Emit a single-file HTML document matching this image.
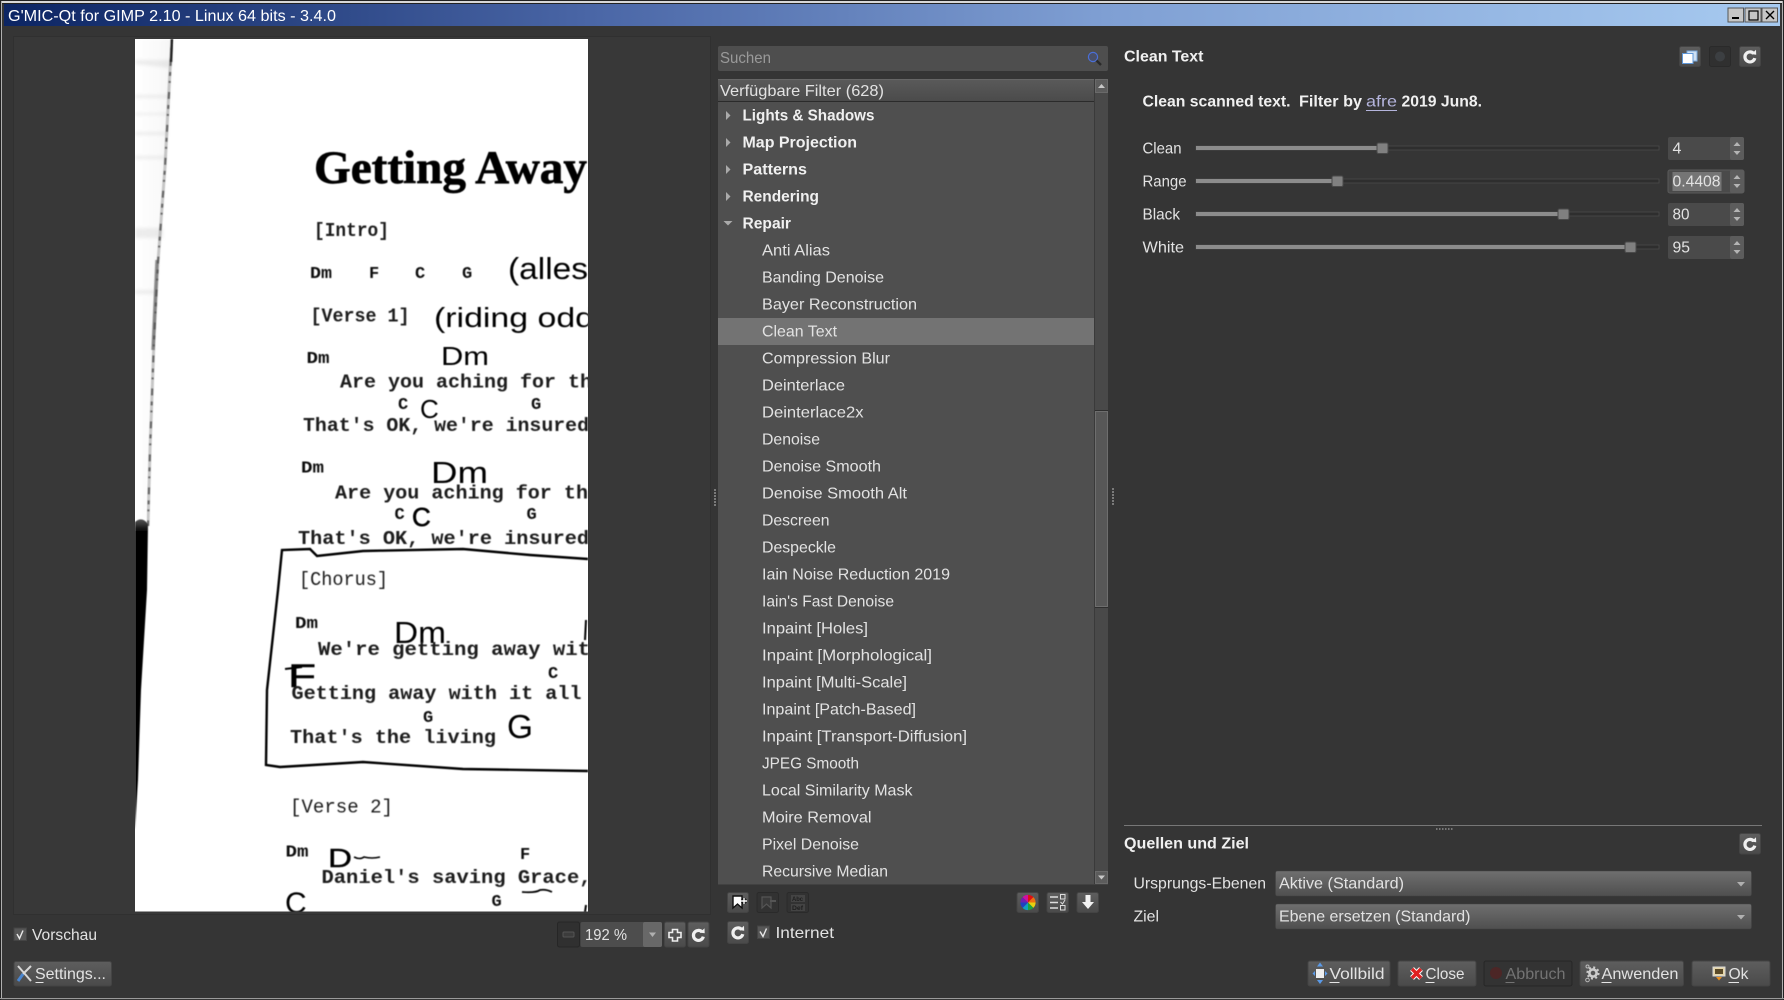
<!DOCTYPE html>
<html><head><meta charset="utf-8"><title>G'MIC-Qt</title>
<style>
html,body{margin:0;padding:0;background:#353535;width:1784px;height:1000px;overflow:hidden}
svg{display:block}
text{font-family:"Liberation Sans",sans-serif;font-size:16px;fill:#e2e2e2;white-space:pre}
.b{font-weight:bold;fill:#f0f0f0}
.m{font-family:"Liberation Mono",monospace;font-weight:bold;font-size:19px;fill:#1a1a1a}
.c{font-family:"Liberation Mono",monospace;font-weight:bold;font-size:17px;fill:#111}
.h{font-family:"Liberation Sans",sans-serif;fill:#000}
.i{font-style:italic}
</style></head><body>
<svg width="1784" height="1000" viewBox="0 0 1784 1000" xmlns="http://www.w3.org/2000/svg">
<defs>
<linearGradient id="tb" x1="0" x2="1" y1="0" y2="0"><stop offset="0" stop-color="#0c2563"/><stop offset=".33" stop-color="#4a66a6"/><stop offset=".62" stop-color="#7f9fd3"/><stop offset="1" stop-color="#a7caf0"/></linearGradient>
<linearGradient id="btn" x1="0" x2="0" y1="0" y2="1"><stop offset="0" stop-color="#5e5e5e"/><stop offset="1" stop-color="#4a4a4a"/></linearGradient>
<linearGradient id="cmb" x1="0" x2="0" y1="0" y2="1"><stop offset="0" stop-color="#6f6f6f"/><stop offset="1" stop-color="#4f4f4f"/></linearGradient>
<linearGradient id="hdr" x1="0" x2="0" y1="0" y2="1"><stop offset="0" stop-color="#5a5a5a"/><stop offset="1" stop-color="#4b4b4b"/></linearGradient>
<linearGradient id="smear" x1="0" x2="1" y1="0" y2="0"><stop offset="0" stop-color="#ddd" stop-opacity=".2"/><stop offset="1" stop-color="#999" stop-opacity=".75"/></linearGradient>
<linearGradient id="bar" x1="0" x2="0" y1="0" y2="1"><stop offset="0" stop-color="#555"/><stop offset=".04" stop-color="#000"/><stop offset="1" stop-color="#000"/></linearGradient>
<clipPath id="scan"><rect x="135" y="39" width="453" height="872.5"/></clipPath>
<filter id="soft" x="-5%" y="-5%" width="110%" height="110%"><feGaussianBlur stdDeviation=".5"/></filter>
<filter id="soft2" x="-50%" y="-5%" width="200%" height="110%"><feGaussianBlur stdDeviation="1.5"/></filter>
<symbol id="refresh" viewBox="0 0 22 22" overflow="visible">
  <path d="M14.6 8A5 5 0 1 0 15.8 12.6" fill="none" stroke="#f0f0f0" stroke-width="3.2"/>
  <path d="M12.4 8.6L17.2 9.2L17 4.2Z" fill="#f0f0f0"/>
</symbol>
</defs>

<!-- window -->
<rect width="1784" height="1000" fill="#353535"/>
<rect x="0" y="0" width="1784" height="1" fill="#222"/>
<rect x="0" y="1" width="1784" height="2" fill="#d8d8d8"/>
<rect x="0" y="3" width="1784" height="1" fill="#222"/>
<rect x="0" y="0" width="1" height="1000" fill="#222"/>
<rect x="1" y="1" width="1" height="998" fill="#b0b0b0"/>
<rect x="1782" y="1" width="1" height="998" fill="#b0b0b0"/>
<rect x="1783" y="0" width="1" height="1000" fill="#222"/>
<rect x="0" y="998" width="1784" height="1" fill="#9a9a9a"/>
<rect x="4" y="4" width="1776" height="22" fill="url(#tb)"/>
<text x="8" y="21" textLength="328" lengthAdjust="spacingAndGlyphs" style="fill:#fff;font-size:16px">G'MIC-Qt for GIMP 2.10 - Linux 64 bits - 3.4.0</text>
<!-- window buttons -->
<g>
<rect x="1728" y="8" width="15.5" height="14" fill="#c6c6c6" stroke="#555"/><rect x="1732" y="17" width="7" height="2" fill="#000"/>
<rect x="1745" y="8" width="16" height="14" fill="#c6c6c6" stroke="#555"/><rect x="1749" y="11" width="9" height="9" fill="none" stroke="#000" stroke-width="1.2"/>
<rect x="1762" y="8" width="15.5" height="14" fill="#c6c6c6" stroke="#555"/><path d="M1766 11L1774 19M1774 11L1766 19" stroke="#000" stroke-width="1.4"/>
</g>

<!-- preview frame -->
<rect x="13.5" y="36.5" width="697" height="878" fill="#383838" stroke="#303030"/>
<rect x="135" y="39" width="453" height="872.5" fill="#fff"/>

<g clip-path="url(#scan)">
 <g filter="url(#soft2)">
  <path d="M135 60H172L170 68 135 64Z M135 95H170V98H135Z M135 113H169V115H135Z M135 132H168V135H135Z M135 156H166V159H135Z M135 228H163V238H135Z M135 290H156V294H135Z" fill="#cfcfcf" opacity=".35"/>
  <path d="M135 39H173L165 167 158 260 150 420 147 520H135Z" fill="url(#smear)" opacity=".14"/>
 </g>
 <g filter="url(#soft)" fill="none">
 <path d="M172 39L170 70 165 167 158 262 154 340 150 450 148 526" stroke="#999" stroke-width="3" opacity=".55"/>
 <path d="M172 39L170 75 165 167 158 262 154 340 150 450 148 526" stroke="#333" stroke-width="2.2" stroke-dasharray="4 5 2 9 7 6" opacity=".65"/>
 <path d="M172 39L171 62" stroke="#222" stroke-width="2.5"/>
 <path d="M157 260L153 350" stroke="#555" stroke-width="3.5" opacity=".6"/>
 </g>
 <path d="M135 522Q142 516 148 524L147 590 141 690 138 780 135 830Z" fill="url(#bar)" filter="url(#soft)"/>
 <g filter="url(#soft)">
 <text x="314" y="183" textLength="273" lengthAdjust="spacingAndGlyphs" style="font-family:'Liberation Serif',serif;font-weight:bold;font-size:47px;fill:#000;stroke:#000;stroke-width:.7">Getting Away</text>
 <text class="m" x="314" y="236" textLength="75" lengthAdjust="spacingAndGlyphs">[Intro]</text>
 <text class="c" x="310" y="278" textLength="22" lengthAdjust="spacingAndGlyphs">Dm</text>
 <text class="c" x="369" y="278">F</text><text class="c" x="415" y="278">C</text><text class="c" x="462" y="278">G</text>
 <text class="h" x="508" y="279" textLength="80" lengthAdjust="spacingAndGlyphs" style="font-size:31px">(alles</text>
 <text class="m" x="310.5" y="321.5" textLength="99" lengthAdjust="spacingAndGlyphs">[Verse 1]</text>
 <text class="h" x="434" y="327" textLength="160" lengthAdjust="spacingAndGlyphs" style="font-size:28px">(riding odd</text>
 <text class="c" x="306.5" y="363" textLength="23" lengthAdjust="spacingAndGlyphs">Dm</text>
 <text class="h" x="441" y="365" textLength="48" lengthAdjust="spacingAndGlyphs" style="font-size:26px">Dm</text>
 <text class="m" x="340" y="387.5" textLength="252" lengthAdjust="spacingAndGlyphs">Are you aching for th</text>
 <text class="c" x="398" y="409">C</text><text class="c" x="531" y="409">G</text>
 <text class="h" x="420" y="418" style="font-size:26px">C</text>
 <text class="m" x="303" y="431" textLength="286" lengthAdjust="spacingAndGlyphs">That's OK, we're insured</text>
 <text class="c" x="301" y="472.5" textLength="23" lengthAdjust="spacingAndGlyphs">Dm</text>
 <text class="h" x="431" y="483" textLength="57" lengthAdjust="spacingAndGlyphs" style="font-size:31px">Dm</text>
 <text class="m" x="335" y="498.5" textLength="253" lengthAdjust="spacingAndGlyphs">Are you aching for th</text>
 <text class="c" x="394.5" y="519">C</text><text class="c" x="526.5" y="519">G</text>
 <text class="h" x="412" y="526" style="font-size:26px;stroke:#000;stroke-width:.6">C</text>
 <text class="m" x="298" y="544" textLength="291" lengthAdjust="spacingAndGlyphs">That's OK, we're insured</text>
 <path d="M588 559L530 555 463 549 363 551 317 556 310 549 282 550 278 590 267 690 266 765 280 767 363 762 463 769 588 771" fill="none" stroke="#000" stroke-width="2.4"/>
 <text class="m" x="299" y="585" textLength="89" lengthAdjust="spacingAndGlyphs" style="font-weight:normal">[Chorus]</text>
 <text class="c" x="295" y="628" textLength="23" lengthAdjust="spacingAndGlyphs">Dm</text>
 <text class="h" x="394" y="643" textLength="52" lengthAdjust="spacingAndGlyphs" style="font-size:31px">Dm</text>
 <text class="m" x="318" y="655" textLength="272" lengthAdjust="spacingAndGlyphs">We're getting away wit</text>
 <path d="M586 620L585 640" stroke="#000" stroke-width="2"/>
 <text class="h" x="288" y="687" textLength="28" lengthAdjust="spacingAndGlyphs" style="font-size:32px;stroke:#000;stroke-width:.5">F</text>
 <path d="M285 669L302 667" stroke="#000" stroke-width="2"/>
 <text class="c" x="548" y="678">C</text>
 <text class="m" x="291.5" y="699" textLength="290" lengthAdjust="spacingAndGlyphs">Getting away with it all</text>
 <text class="c" x="423" y="722">G</text>
 <text class="h" x="507" y="738" textLength="26" lengthAdjust="spacingAndGlyphs" style="font-size:33px">G</text>
 <text class="m" x="290" y="743" textLength="206" lengthAdjust="spacingAndGlyphs">That's the living</text>
 <text class="m" x="290" y="812.5" textLength="103" lengthAdjust="spacingAndGlyphs" style="font-weight:normal">[Verse 2]</text>
 <text class="c" x="285.5" y="856.5" textLength="23" lengthAdjust="spacingAndGlyphs">Dm</text>
 <text class="h" x="328" y="867" textLength="24" lengthAdjust="spacingAndGlyphs" style="font-size:26px;stroke:#000;stroke-width:.4">D</text>
 <path d="M354 857Q360 860 364 857Q372 859 380 857" fill="none" stroke="#000" stroke-width="1.6"/>
 <text class="c" x="520" y="859">F</text>
 <text class="m" x="321.5" y="883" textLength="270" lengthAdjust="spacingAndGlyphs">Daniel's saving Grace,</text>
 <path d="M522 892Q536 893 540 890Q546 889 552 892" fill="none" stroke="#000" stroke-width="1.8"/>
 <text class="c" x="491.5" y="906" style="font-size:17px">G</text>
 <text class="h" x="285" y="913" style="font-size:30px">C</text>
 <path d="M586 905L585 912" stroke="#000" stroke-width="2"/>
 </g>
</g>

<!-- bottom-left -->
<rect x="14" y="928" width="12.5" height="12.5" fill="#565656" stroke="#444"/>
<path d="M17 934L19.5 938.5 23 930.5" fill="none" stroke="#e8e8e8" stroke-width="1.4"/>
<text x="32" y="940" textLength="65" lengthAdjust="spacingAndGlyphs">Vorschau</text>

<rect x="14" y="961.5" width="97.5" height="24.5" rx="2" fill="url(#btn)" stroke="#444"/>
<path d="M18 966L31 981" stroke="#d8d8d8" stroke-width="2"/>
<path d="M31 966L23 974" stroke="#d8d8d8" stroke-width="2"/>
<path d="M23 974L18 981" stroke="#4a86d0" stroke-width="3"/>
<text x="35" y="979" textLength="71" lengthAdjust="spacingAndGlyphs">Settings...</text>
<rect x="35.5" y="982" width="8" height="1" fill="#e6e6e6"/>

<!-- zoom controls -->
<rect x="557.5" y="922" width="22" height="25" rx="2" fill="#303030" stroke="#262626"/>
<rect x="563" y="932" width="11" height="5" rx="1" fill="#3c3c3c" stroke="#555"/>
<rect x="580.5" y="922" width="81.5" height="25" rx="2" fill="#4d4d4d"/>
<rect x="643" y="922" width="19" height="25" rx="2" fill="#686868"/>
<path d="M649 932.5H656L652.5 937Z" fill="#b0b0b0"/>
<text x="585" y="940" textLength="42" lengthAdjust="spacingAndGlyphs">192 %</text>
<rect x="664.5" y="922" width="21" height="25" rx="2" fill="url(#btn)" stroke="#444"/>
<path d="M672.5 929.5H677.5V932.5H681V937.5H677.5V941H672.5V937.5H669V932.5H672.5Z" fill="none" stroke="#eee" stroke-width="1.6"/>
<rect x="688" y="922" width="21" height="25" rx="2" fill="url(#btn)" stroke="#444"/>
<use href="#refresh" x="687.5" y="924" width="22" height="22"/>

<!-- splitter handles -->
<g fill="#7a7a7a">
<rect x="714" y="489" width="2" height="2"/><rect x="714" y="492" width="2" height="2"/><rect x="714" y="495" width="2" height="2"/><rect x="714" y="498" width="2" height="2"/><rect x="714" y="501" width="2" height="2"/><rect x="714" y="504" width="2" height="2"/>
<rect x="1112" y="488" width="2" height="2"/><rect x="1112" y="491" width="2" height="2"/><rect x="1112" y="494" width="2" height="2"/><rect x="1112" y="497" width="2" height="2"/><rect x="1112" y="500" width="2" height="2"/><rect x="1112" y="503" width="2" height="2"/>
</g>

<!-- search -->
<rect x="718" y="46" width="390" height="25" rx="2" fill="#4e4e4e"/>
<text x="720" y="63" textLength="51" lengthAdjust="spacingAndGlyphs" style="fill:#9a9a9a">Suchen</text>
<circle cx="1093" cy="57" r="4.6" fill="#4a5068" stroke="#4a6fd8" stroke-width="1.2"/>
<path d="M1096.5 60.5L1101 65" stroke="#2a2a2a" stroke-width="2.4"/>

<!-- list -->
<rect x="718" y="79" width="377" height="805" fill="#4f4f4f"/>
<rect x="718" y="79" width="376" height="22" fill="url(#hdr)"/>
<rect x="718" y="101" width="376" height="1" fill="#2b2b2b"/>
<rect x="718" y="79" width="376" height="1" fill="#666"/>
<rect x="718" y="884" width="390" height="1" fill="#414141"/>
<text x="720" y="96" textLength="164" lengthAdjust="spacingAndGlyphs">Verfügbare Filter (628)</text>
<!-- scrollbar -->
<rect x="1094" y="79" width="14" height="805" fill="#494949"/>
<rect x="1094" y="79" width="1" height="805" fill="#3a3a3a"/>
<rect x="1095.5" y="79.5" width="12" height="13" fill="#5c5c5c" stroke="#6a6a6a"/>
<path d="M1098 88H1105L1101.5 84Z" fill="#c8c8c8"/>
<rect x="1095.5" y="871.5" width="12" height="12" fill="#5c5c5c" stroke="#6a6a6a"/>
<path d="M1098 875.5H1105L1101.5 879.5Z" fill="#c8c8c8"/>
<rect x="1095" y="410" width="13" height="198" fill="#2e2e2e"/>
<rect x="1095.5" y="411.5" width="12" height="195" fill="#575757" stroke="#6e6e6e"/>

<!-- tree arrows -->
<g fill="#aaa">
<path d="M726 111L726 120 730.5 115.5Z"/>
<path d="M726 138L726 147 730.5 142.5Z"/>
<path d="M726 165L726 174 730.5 169.5Z"/>
<path d="M726 192L726 201 730.5 196.5Z"/>
<path d="M723.5 221H732.5L728 225.5Z"/>
</g>
<g transform="translate(0 -.5)">
<text class="b" x="742.5" y="121" textLength="132" lengthAdjust="spacingAndGlyphs">Lights &amp; Shadows</text>
<text class="b" x="742.5" y="148" textLength="114.5" lengthAdjust="spacingAndGlyphs">Map Projection</text>
<text class="b" x="742.5" y="175" textLength="64.5" lengthAdjust="spacingAndGlyphs">Patterns</text>
<text class="b" x="742.5" y="202" textLength="76.5" lengthAdjust="spacingAndGlyphs">Rendering</text>
<text class="b" x="742.5" y="229" textLength="48.5" lengthAdjust="spacingAndGlyphs">Repair</text>
</g>

<rect x="718" y="318" width="376" height="27" fill="#737373"/>

<g transform="translate(0 -.5)">
<text x="762" y="256" textLength="68" lengthAdjust="spacingAndGlyphs">Anti Alias</text>
<text x="762" y="283" textLength="122" lengthAdjust="spacingAndGlyphs">Banding Denoise</text>
<text x="762" y="310" textLength="155" lengthAdjust="spacingAndGlyphs">Bayer Reconstruction</text>
<text x="762" y="337" textLength="75" lengthAdjust="spacingAndGlyphs">Clean Text</text>
<text x="762" y="364" textLength="128" lengthAdjust="spacingAndGlyphs">Compression Blur</text>
<text x="762" y="391" textLength="83" lengthAdjust="spacingAndGlyphs">Deinterlace</text>
<text x="762" y="418" textLength="101.5" lengthAdjust="spacingAndGlyphs">Deinterlace2x</text>
<text x="762" y="445" textLength="58" lengthAdjust="spacingAndGlyphs">Denoise</text>
<text x="762" y="472" textLength="119" lengthAdjust="spacingAndGlyphs">Denoise Smooth</text>
<text x="762" y="499" textLength="145" lengthAdjust="spacingAndGlyphs">Denoise Smooth Alt</text>
<text x="762" y="526" textLength="67.5" lengthAdjust="spacingAndGlyphs">Descreen</text>
<text x="762" y="553" textLength="74" lengthAdjust="spacingAndGlyphs">Despeckle</text>
<text x="762" y="580" textLength="188" lengthAdjust="spacingAndGlyphs">Iain Noise Reduction 2019</text>
<text x="762" y="607" textLength="132" lengthAdjust="spacingAndGlyphs">Iain's Fast Denoise</text>
<text x="762" y="634" textLength="106" lengthAdjust="spacingAndGlyphs">Inpaint [Holes]</text>
<text x="762" y="661" textLength="170" lengthAdjust="spacingAndGlyphs">Inpaint [Morphological]</text>
<text x="762" y="688" textLength="145" lengthAdjust="spacingAndGlyphs">Inpaint [Multi-Scale]</text>
<text x="762" y="715" textLength="154" lengthAdjust="spacingAndGlyphs">Inpaint [Patch-Based]</text>
<text x="762" y="742" textLength="205" lengthAdjust="spacingAndGlyphs">Inpaint [Transport-Diffusion]</text>
<text x="762" y="769" textLength="97" lengthAdjust="spacingAndGlyphs">JPEG Smooth</text>
<text x="762" y="796" textLength="150.5" lengthAdjust="spacingAndGlyphs">Local Similarity Mask</text>
<text x="762" y="823" textLength="109.5" lengthAdjust="spacingAndGlyphs">Moire Removal</text>
<text x="762" y="850" textLength="97" lengthAdjust="spacingAndGlyphs">Pixel Denoise</text>
<text x="762" y="877" textLength="126" lengthAdjust="spacingAndGlyphs">Recursive Median</text>
</g>

<!-- filter toolbar -->
<rect x="727.5" y="892.5" width="21" height="20" rx="2" fill="url(#btn)" stroke="#444"/>
<path d="M733 896H742V908L737.5 904 733 908Z" fill="#fff" stroke="#111" stroke-width="1.4"/>
<path d="M741 901H747M744 898V904" stroke="#111" stroke-width="3"/><path d="M741 901H747M744 898V904" stroke="#fff" stroke-width="1.4"/>
<rect x="757" y="892.5" width="21.5" height="20" rx="2" fill="#323232" stroke="#2a2a2a"/>
<path d="M762 897H771V908L766.5 904 762 908Z" fill="#3a3a3a" stroke="#555" stroke-width="1.2"/>
<path d="M770 901H776" stroke="#555" stroke-width="2"/>
<rect x="787" y="892.5" width="21.5" height="20" rx="2" fill="#323232" stroke="#2a2a2a"/>
<rect x="791" y="895" width="14" height="7" fill="#444"/><rect x="791" y="904" width="14" height="7" fill="#444"/>
<text x="792" y="901" textLength="11" lengthAdjust="spacingAndGlyphs" style="font-size:6.5px;fill:#1e1e1e;font-weight:bold">Abc</text>
<text x="792" y="910" textLength="11" lengthAdjust="spacingAndGlyphs" style="font-size:6.5px;fill:#1e1e1e;font-weight:bold">Def</text>

<rect x="1017" y="892.5" width="21.5" height="20" rx="2" fill="url(#btn)" stroke="#444"/>
<g fill="none" stroke-width="7.6" transform="translate(1028 902.5)">
<circle r="3.8" stroke="#e01010" stroke-dasharray="3 21" transform="rotate(-90)"/>
<circle r="3.8" stroke="#f07010" stroke-dasharray="3 21" transform="rotate(-45)"/>
<circle r="3.8" stroke="#e8d010" stroke-dasharray="3 21" transform="rotate(0)"/>
<circle r="3.8" stroke="#20a040" stroke-dasharray="3 21" transform="rotate(45)"/>
<circle r="3.8" stroke="#10a0c0" stroke-dasharray="3 21" transform="rotate(90)"/>
<circle r="3.8" stroke="#2040c0" stroke-dasharray="3 21" transform="rotate(135)"/>
<circle r="3.8" stroke="#7020b0" stroke-dasharray="3 21" transform="rotate(180)"/>
<circle r="3.8" stroke="#d010a0" stroke-dasharray="3 21" transform="rotate(225)"/>
</g>
<rect x="1047" y="892.5" width="21.5" height="20" rx="2" fill="url(#btn)" stroke="#444"/>
<path d="M1050 897H1058M1050 902.5H1058M1050 908H1058" stroke="#ddd" stroke-width="1.4"/>
<rect x="1060.5" y="894.5" width="4.5" height="4.5" fill="none" stroke="#ddd"/><rect x="1060.5" y="905.5" width="4.5" height="4.5" fill="none" stroke="#ddd"/>
<path d="M1060.5 902L1062.5 904 1065 900" fill="none" stroke="#ddd"/>
<rect x="1077" y="892.5" width="21.5" height="20" rx="2" fill="url(#btn)" stroke="#444"/>
<path d="M1085.5 895H1090.5V902H1094L1088 909 1082 902H1085.5Z" fill="#f2f2f2"/>

<rect x="727.5" y="921.5" width="21" height="22" rx="2" fill="url(#btn)" stroke="#444"/>
<use href="#refresh" x="727" y="921.5" width="22" height="22"/>
<rect x="757.5" y="926" width="12" height="12.5" fill="#565656" stroke="#444"/>
<path d="M760 931.5L763 936.5 766.5 928.5" fill="none" stroke="#e8e8e8" stroke-width="1.4"/>
<text x="775.5" y="938" textLength="58.5" lengthAdjust="spacingAndGlyphs">Internet</text>

<!-- right panel header -->
<text class="b" x="1124" y="61.5" textLength="79.5" lengthAdjust="spacingAndGlyphs">Clean Text</text>
<rect x="1679.5" y="46.5" width="21" height="20" rx="2" fill="url(#btn)" stroke="#444"/>
<rect x="1687" y="51" width="10" height="10" fill="#cfe0f2" stroke="#79a8dc"/>
<rect x="1682.5" y="53.5" width="10.5" height="10" fill="#fff" stroke="#5f97d8"/>
<rect x="1709.5" y="46.5" width="21" height="20" rx="2" fill="#303030" stroke="#2a2a2a"/>
<circle cx="1720" cy="56.5" r="5" fill="#3c3f42"/>
<rect x="1739.5" y="46.5" width="21" height="20" rx="2" fill="url(#btn)" stroke="#444"/>
<use href="#refresh" x="1739" y="45.5" width="22" height="22"/>

<text class="b" x="1142.5" y="106.5" textLength="148" lengthAdjust="spacingAndGlyphs">Clean scanned text.</text>
<text class="b" x="1299" y="106.5" textLength="63" lengthAdjust="spacingAndGlyphs">Filter by</text>
<text class="b" x="1366" y="106.5" textLength="31" lengthAdjust="spacingAndGlyphs" style="fill:#b4b4dc;font-weight:normal">afre</text>
<rect x="1366" y="110" width="31" height="1" fill="#b4b4dc"/>
<text class="b" x="1401.5" y="106.5" textLength="80.5" lengthAdjust="spacingAndGlyphs">2019 Jun8.</text>

<!-- sliders -->
<text x="1142.5" y="153.5" textLength="39" lengthAdjust="spacingAndGlyphs">Clean</text>
<text x="1142.5" y="186.5" textLength="44" lengthAdjust="spacingAndGlyphs">Range</text>
<text x="1142.5" y="219.5" textLength="37.5" lengthAdjust="spacingAndGlyphs">Black</text>
<text x="1142.5" y="252.5" textLength="41.5" lengthAdjust="spacingAndGlyphs">White</text>

<g>
<rect x="1196" y="146" width="463" height="4" fill="#2e2e2e" stroke="#4a4a4a" stroke-width=".8"/><rect x="1196" y="146" width="186" height="4" fill="#8c8c8c"/>
<rect x="1377" y="143" width="11" height="10.5" rx="1.5" fill="#808080" stroke="#4a4a4a"/>
<rect x="1196" y="179" width="463" height="4" fill="#2e2e2e" stroke="#4a4a4a" stroke-width=".8"/><rect x="1196" y="179" width="141" height="4" fill="#8c8c8c"/>
<rect x="1332" y="176" width="11" height="10.5" rx="1.5" fill="#808080" stroke="#4a4a4a"/>
<rect x="1196" y="212" width="463" height="4" fill="#2e2e2e" stroke="#4a4a4a" stroke-width=".8"/><rect x="1196" y="212" width="367" height="4" fill="#8c8c8c"/>
<rect x="1558" y="209" width="11" height="10.5" rx="1.5" fill="#808080" stroke="#4a4a4a"/>
<rect x="1196" y="245" width="463" height="4" fill="#2e2e2e" stroke="#4a4a4a" stroke-width=".8"/><rect x="1196" y="245" width="434" height="4" fill="#8c8c8c"/>
<rect x="1625" y="242" width="11" height="10.5" rx="1.5" fill="#808080" stroke="#4a4a4a"/>
</g>

<!-- spins -->
<g>
<rect x="1668" y="137" width="76" height="23" rx="2" fill="#4a4a4a"/><rect x="1730" y="137" width="14" height="23" rx="2" fill="#5c5c5c"/>
<path d="M1733.5 146H1740.5L1737 142Z M1733.5 151H1740.5L1737 155Z" fill="#b4b4b4"/>
<rect x="1668" y="170" width="76" height="23" rx="2" fill="#4a4a4a" stroke="#5a5a5a"/><rect x="1730" y="170" width="14" height="23" rx="2" fill="#5c5c5c"/>
<path d="M1733.5 179H1740.5L1737 175Z M1733.5 184H1740.5L1737 188Z" fill="#b4b4b4"/>
<rect x="1668" y="203" width="76" height="23" rx="2" fill="#4a4a4a"/><rect x="1730" y="203" width="14" height="23" rx="2" fill="#5c5c5c"/>
<path d="M1733.5 212H1740.5L1737 208Z M1733.5 217H1740.5L1737 221Z" fill="#b4b4b4"/>
<rect x="1668" y="236" width="76" height="23" rx="2" fill="#4a4a4a"/><rect x="1730" y="236" width="14" height="23" rx="2" fill="#5c5c5c"/>
<path d="M1733.5 245H1740.5L1737 241Z M1733.5 250H1740.5L1737 254Z" fill="#b4b4b4"/>
<rect x="1672.5" y="172" width="49" height="19" fill="#757575"/>
</g>
<text x="1672.5" y="153.5">4</text>
<text x="1672.5" y="186.5" textLength="48" lengthAdjust="spacingAndGlyphs">0.4408</text>
<text x="1672.5" y="219.5" textLength="17" lengthAdjust="spacingAndGlyphs">80</text>
<text x="1672.5" y="252.5" textLength="17.5" lengthAdjust="spacingAndGlyphs">95</text>

<!-- sources -->
<rect x="1124" y="825" width="638" height="1" fill="#777"/>
<g fill="#777"><rect x="1436" y="828" width="1.5" height="2"/><rect x="1439" y="828" width="1.5" height="2"/><rect x="1442" y="828" width="1.5" height="2"/><rect x="1445" y="828" width="1.5" height="2"/><rect x="1448" y="828" width="1.5" height="2"/><rect x="1451" y="828" width="1.5" height="2"/></g>
<text class="b" x="1124" y="848.5" textLength="125" lengthAdjust="spacingAndGlyphs">Quellen und Ziel</text>
<rect x="1739.5" y="833.5" width="21" height="20.5" rx="2" fill="url(#btn)" stroke="#444"/>
<use href="#refresh" x="1739" y="833" width="22" height="22"/>

<text x="1133.5" y="888.5" textLength="132.5" lengthAdjust="spacingAndGlyphs">Ursprungs-Ebenen</text>
<text x="1133.5" y="921.5" textLength="25.5" lengthAdjust="spacingAndGlyphs">Ziel</text>
<rect x="1275.5" y="871" width="476" height="25" rx="2" fill="url(#cmb)" stroke="#444" stroke-width=".6"/>
<rect x="1275.5" y="904" width="476" height="25" rx="2" fill="url(#cmb)" stroke="#444" stroke-width=".6"/>
<text x="1279" y="888.5" textLength="125" lengthAdjust="spacingAndGlyphs">Aktive (Standard)</text>
<text x="1279" y="921.5" textLength="191.5" lengthAdjust="spacingAndGlyphs">Ebene ersetzen (Standard)</text>
<path d="M1737 882H1745L1741 886.5Z M1737 915H1745L1741 919.5Z" fill="#b0b0b0"/>

<!-- bottom buttons -->
<g>
<rect x="1308" y="961" width="82" height="25" rx="2" fill="url(#btn)" stroke="#444"/>
<rect x="1398" y="961" width="78" height="25" rx="2" fill="url(#btn)" stroke="#444"/>
<rect x="1484" y="961" width="88" height="25" rx="2" fill="#333" stroke="#262626"/>
<rect x="1580" y="961" width="103.5" height="25" rx="2" fill="url(#btn)" stroke="#444"/>
<rect x="1692" y="961" width="78" height="25" rx="2" fill="url(#btn)" stroke="#444"/>
</g>
<!-- vollbild icon -->
<rect x="1316" y="969" width="8" height="9" fill="#eee"/>
<path d="M1320 962.5L1323 966.5H1317Z M1320 984L1323 980H1317Z M1312.5 973.5L1315 971V976Z M1327.5 973.5L1325 971V976Z" fill="#5a9ae8"/>
<text x="1329.5" y="979" textLength="55" lengthAdjust="spacingAndGlyphs">Vollbild</text>
<rect x="1329.5" y="982" width="10" height="1" fill="#e6e6e6"/>
<!-- close icon -->
<path d="M1412 969L1421 978M1421 969L1412 978" stroke="#fff" stroke-width="5.4"/>
<path d="M1412 969L1421 978M1421 969L1412 978" stroke="#e02020" stroke-width="3.4"/>
<text x="1425.5" y="979" textLength="39" lengthAdjust="spacingAndGlyphs">Close</text>
<rect x="1425.5" y="982" width="9" height="1" fill="#e6e6e6"/>
<!-- abbruch -->
<circle cx="1496" cy="973" r="6" fill="#4c2626"/>
<text x="1505.5" y="979" textLength="60" lengthAdjust="spacingAndGlyphs" style="fill:#737373">Abbruch</text>
<rect x="1505.5" y="982" width="9" height="1" fill="#737373"/>
<!-- anwenden -->
<circle cx="1593" cy="973" r="3.6" fill="none" stroke="#ccc" stroke-width="2.6"/>
<circle cx="1593" cy="973" r="5.6" fill="none" stroke="#ccc" stroke-width="2" stroke-dasharray="2 2.4"/>
<circle cx="1587.5" cy="980" r="1.8" fill="none" stroke="#bbb"/>
<circle cx="1587.5" cy="966.5" r="1.5" fill="none" stroke="#bbb"/>
<text x="1601.5" y="979" textLength="77" lengthAdjust="spacingAndGlyphs">Anwenden</text>
<rect x="1601.5" y="982" width="10" height="1" fill="#e6e6e6"/>
<!-- ok -->
<rect x="1713" y="967" width="12" height="9" fill="#e6d6a8" stroke="#d8d8d8"/>
<rect x="1715" y="969" width="8" height="5" fill="#5a4a28"/>
<path d="M1716 977H1722L1719 980.5Z" fill="#e89020"/>
<text x="1728.5" y="979" textLength="20" lengthAdjust="spacingAndGlyphs">Ok</text>
<rect x="1728.5" y="982" width="10.5" height="1" fill="#e6e6e6"/>
</svg>
</body></html>
